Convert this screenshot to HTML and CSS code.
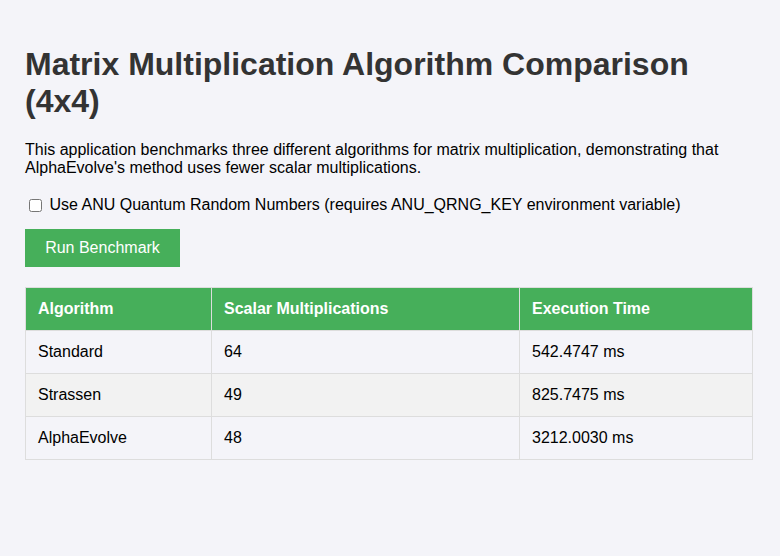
FILE: index.html
```html
<!DOCTYPE html>
<html>
<head>
<meta charset="utf-8">
<link rel="stylesheet" href="styles.css">
</head>
<body>
<div class="page">
  <h1 class="title">Matrix Multiplication Algorithm Comparison (4x4)</h1>
  <p class="intro">This application benchmarks three different algorithms for matrix multiplication, demonstrating that AlphaEvolve's method uses fewer scalar multiplications.</p>
  <div class="option">
    <label class="option-label"><input type="checkbox" class="option-check"> Use ANU Quantum Random Numbers (requires ANU_QRNG_KEY environment variable)</label>
  </div>
  <button class="run-btn">Run Benchmark</button>
  <table class="results">
    <thead>
      <tr><th class="col-alg">Algorithm</th><th class="col-mult">Scalar Multiplications</th><th class="col-time">Execution Time</th></tr>
    </thead>
    <tbody>
      <tr><td>Standard</td><td>64</td><td>542.4747 ms</td></tr>
      <tr><td>Strassen</td><td>49</td><td>825.7475 ms</td></tr>
      <tr><td>AlphaEvolve</td><td>48</td><td>3212.0030 ms</td></tr>
    </tbody>
  </table>
</div>
</body>
</html>
```
FILE: styles.css
```css
html, body {
  margin: 0;
  padding: 0;
  background: #f4f4f9;
}
body {
  font-family: "Liberation Sans", Arial, sans-serif;
  color: #000;
}
.page {
  padding: 25px 27px 25px 25px;
}
.title {
  font-size: 32px;
  font-weight: bold;
  color: #333;
  margin: 21px 0 21px 0;
  line-height: 37px;
}
.intro {
  font-size: 16px;
  margin: 0 0 19px 0;
  line-height: 18px;
}
.option {
  margin: 0 0 14px 0;
  font-size: 16px;
  line-height: 18px;
}
.option-check {
  margin: 3px 3px 3px 4px;
  vertical-align: -2px;
}
.run-btn {
  display: block;
  background: #46af5a;
  color: #fff;
  border: none;
  font-family: "Liberation Sans", Arial, sans-serif;
  font-size: 16px;
  padding: 10px 20px;
  margin: 0 0 20px 0;
  width: 155px;
  height: 38px;
}
.results {
  width: 100%;
  border-collapse: collapse;
  font-size: 16px;
}
.results th, .results td {
  border: 1px solid #ddd;
  padding: 12px;
  text-align: left;
  line-height: 18px;
}
.results th {
  background: #46af5a;
  color: #fff;
  font-weight: bold;
}
.results tbody tr:nth-child(even) td {
  background: #f2f2f2;
}
.col-alg { width: 161px; }
.col-mult { width: 283px; }
```
